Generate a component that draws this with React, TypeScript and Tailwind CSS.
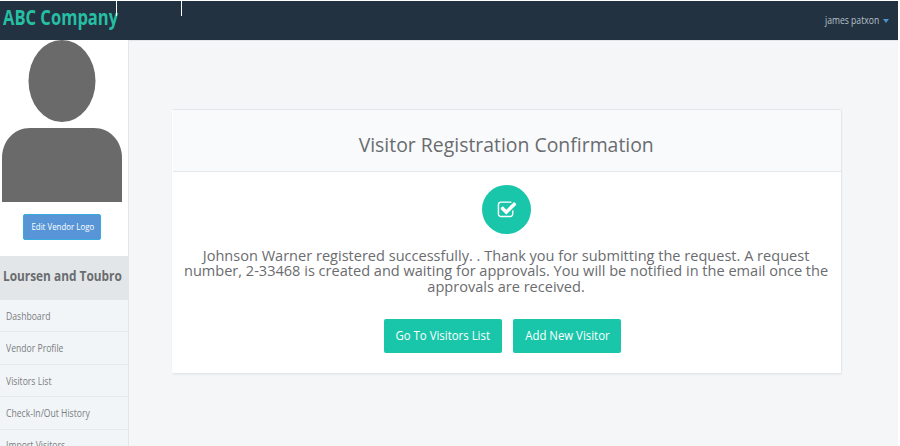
import React from "react";

const menuItems = [
  "Dashboard",
  "Vendor Profile",
  "Visitors List",
  "Check-In/Out History",
  "Import Visitors",
];

const CheckSquareIcon: React.FC<{ className?: string }> = ({ className }) => (
  <svg className={className} viewBox="0 0 1792 1792" fill="currentColor">
    <path d="M1472 930v318q0 119-84.5 203.5t-203.5 84.5h-832q-119 0-203.5-84.5t-84.5-203.5v-832q0-119 84.5-203.5t203.5-84.5h832q63 0 117 25 15 7 18 23 3 17-9 29l-49 49q-10 10-23 10-3 0-9-2-23-6-45-6h-832q-66 0-113 47t-47 113v832q0 66 47 113t113 47h832q66 0 113-47t47-113v-254q0-13 9-22l64-64q10-10 23-10 6 0 12 3 20 8 20 29zm231-489l-814 814q-24 24-57 24t-57-24l-430-430q-24-24-24-57t24-57l110-110q24-24 57-24t57 24l263 263 647-647q24-24 57-24t57 24l110 110q24 24 24 57t-24 57z" />
  </svg>
);

const Header: React.FC = () => (
  <header className="relative flex h-10 shrink-0 items-center justify-between border-t border-white bg-[#233241] pl-[3px] pr-[9px]">
    <span className="w-[115px] origin-left scale-x-[0.807] whitespace-nowrap text-[20.5px] leading-none font-bold text-[#26bfa3] -mt-[6px]">
      ABC Company
    </span>
    <div className="absolute top-0 left-[116px] h-[15px] w-[66px] border-x border-white" />
    <div className="flex items-center gap-[3px] pt-px">
      <span className="w-[55px] origin-left scale-x-[0.82] whitespace-nowrap text-[10.5px] text-[#b3c0cb]">
        james patxon
      </span>
      <svg className="h-[4px] w-[6px]" viewBox="0 0 6 4">
        <path d="M0 0h6L3 4z" fill="#4d94d0" />
      </svg>
    </div>
  </header>
);

const Sidebar: React.FC = () => (
  <aside className="flex w-[129px] shrink-0 flex-col border-r border-[#e4e7ea] bg-white">
    <svg className="h-[162px] w-[128px] shrink-0" viewBox="0 0 128 162" fill="#6a6a6a">
      <ellipse cx="62" cy="41" rx="33.5" ry="41" />
      <path d="M2 162v-44C2 101 14 88 30 88h64c16 0 28 13 28 30v44z" />
    </svg>
    <div className="flex h-[54px] shrink-0 items-start pt-3 pl-[23px]">
      <button className="flex h-[26px] w-[78px] items-center justify-center rounded-[2px] border border-[#36abdc] bg-[#5895d6] pl-px text-[9.5px] text-white">
        <span className="scale-x-[0.83] whitespace-nowrap">Edit Vendor Logo</span>
      </button>
    </div>
    <div className="flex h-11 shrink-0 items-center bg-[#e2e6e9] pl-[3px] pb-[5px]">
      <span className="origin-left scale-x-[0.847] whitespace-nowrap text-[14px] font-bold text-[#6a6c6f]">
        Loursen and Toubro
      </span>
    </div>
    <nav className="flex flex-col">
      {menuItems.map((item) => (
        <a
          key={item}
          className="flex h-[32.4px] shrink-0 items-center border-b border-[#e6eaed] bg-[#f1f5f8] pt-[2px] pl-[6px] text-[10.5px] text-[#7b7d80]"
        >
          <span className="origin-left scale-x-[0.82] whitespace-nowrap">{item}</span>
        </a>
      ))}
    </nav>
  </aside>
);

const ConfirmationCard: React.FC = () => (
  <section className="h-[265px] w-[670px] rounded-[2px] border border-[#e4e7ea] border-l-white bg-white text-center text-[#6a6c6f] shadow-[0_1px_2px_rgba(0,0,0,0.05)]">
    <div className="flex h-[62px] items-center justify-center border-b border-[#e4e7ea] bg-[#f9fafc] pt-2 pr-px">
      <h1 className="scale-x-[0.957] whitespace-nowrap text-[20.3px]">Visitor Registration Confirmation</h1>
    </div>
    <div className="flex flex-col items-center pt-[13px] pr-px">
      <div className="flex size-[49px] items-center justify-center rounded-full bg-[#1ac6aa]">
        <CheckSquareIcon className="size-5 text-white" />
      </div>
      <p className="mt-[14px] scale-x-[0.97] whitespace-nowrap text-[15px] leading-[15.4px]">
        Johnson Warner registered successfully. . Thank you for submitting the request. A request
        <br />
        number, 2-33468 is created and waiting for approvals. You will be notified in the email once the
        <br />
        approvals are received.
      </p>
      <div className="mt-[25px] mr-2 flex gap-[11px] text-[12px] font-medium text-white">
        <button className="h-[34px] w-[118px] rounded-[2px] bg-[#1ac6aa]">
          <span className="inline-block scale-x-[0.95] whitespace-nowrap">Go To Visitors List</span>
        </button>
        <button className="h-[34px] w-[108px] rounded-[2px] bg-[#1ac6aa]">
          <span className="inline-block scale-x-[0.95] whitespace-nowrap">Add New Visitor</span>
        </button>
      </div>
    </div>
  </section>
);

export default function App() {
  return (
    <div className="h-[446px] w-[900px] overflow-hidden bg-white font-['Open_Sans',sans-serif]">
      <div className="flex h-full w-[898px] flex-col">
        <Header />
        <div className="flex min-h-0 flex-1">
          <Sidebar />
          <main className="flex-1 border-t border-[#e4e7ea] bg-[#f5f6f8] pt-[68px] pl-[43px]">
            <ConfirmationCard />
          </main>
        </div>
      </div>
    </div>
  );
}
